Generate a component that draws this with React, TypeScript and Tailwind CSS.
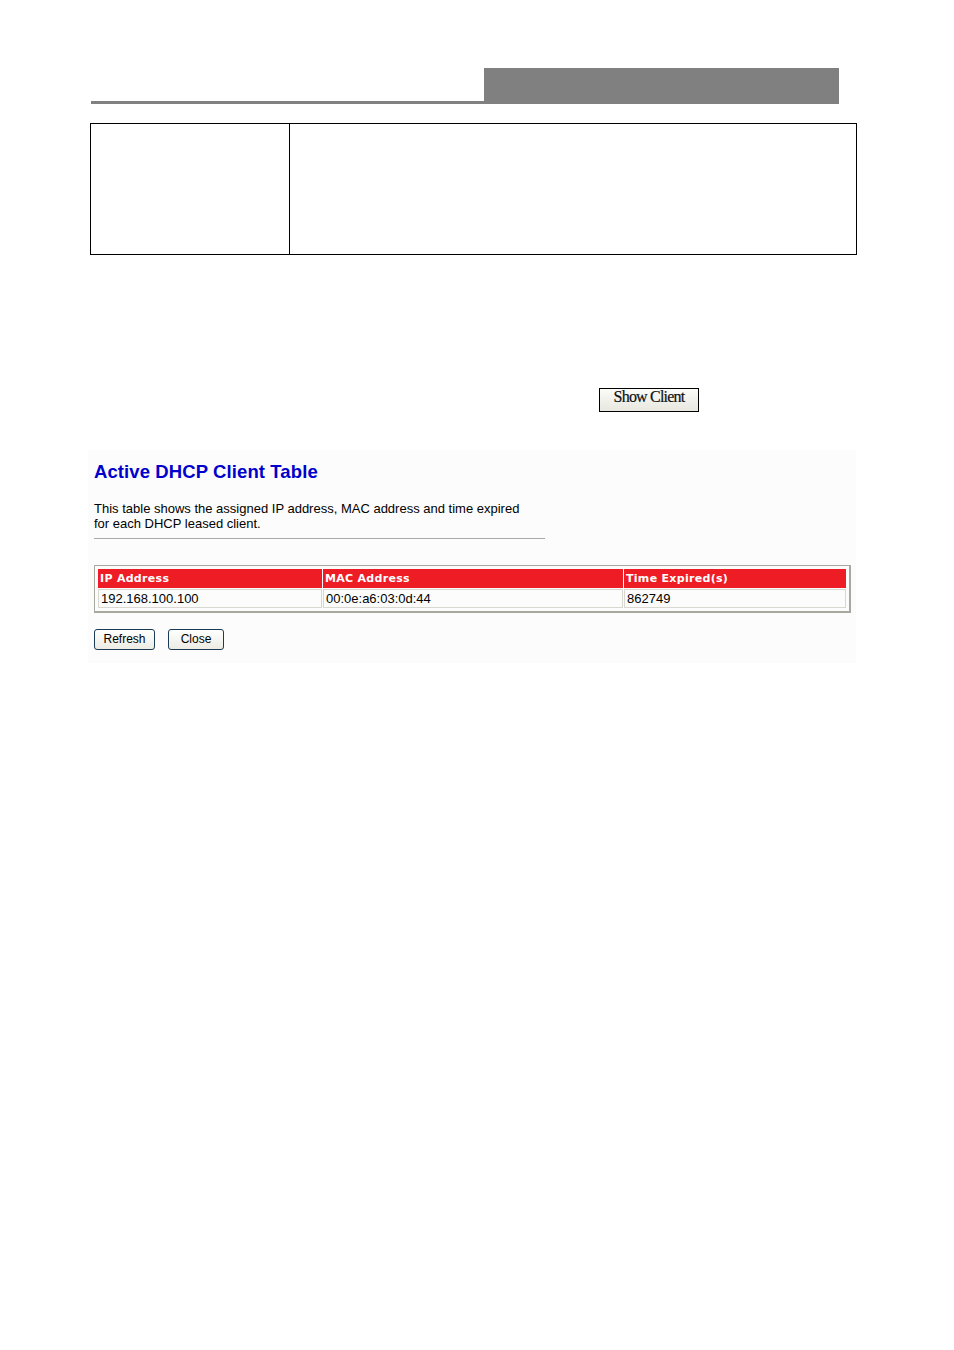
import React from "react";

export default function App() {
  const cell = "border border-[#d8d8d0] px-[2px] h-[19px] leading-[17px] text-[13px] text-black";
  const head = "bg-[#ee1c25] px-[2px] h-[19px] leading-[19px] text-[11px] font-bold text-white tracking-[0.3px]";
  return (
    <div className="w-[954px] h-[1350px] bg-white relative" style={{ fontFamily: '"Liberation Sans", Arial, sans-serif' }}>
      <div className="pt-[68px] pl-[91px] flex items-end">
        <div className="w-[393px] h-[3px] bg-[#808080]" />
        <div className="w-[355px] h-[36px] bg-[#808080]" />
      </div>
      <div className="mt-[19px] ml-[90px] w-[767px] h-[132px] border border-black flex">
        <div className="w-[199px] h-full border-r border-black" />
        <div className="flex-1" />
      </div>
      <div className="mt-[133px] ml-[599px]">
        <button
          className="w-[100px] h-[24px] border border-black bg-gradient-to-b from-[#fbfbf8] to-[#e8e8e0] text-[16px] leading-[16px] pt-[0px] text-[#111] tracking-[-0.8px] flex items-start justify-center [-webkit-text-stroke:0.2px_#111]"
          style={{ fontFamily: '"Liberation Serif", "Times New Roman", serif' }}
        >
          Show Client
        </button>
      </div>
      <div className="mt-[38px] ml-[88px] w-[768px] h-[213px] bg-[#fcfcfc] pl-[6px] pt-[11px]">
        <h1 className="text-[18.5px] leading-[22px] font-bold text-[#0000cc] tracking-[0.1px]">Active DHCP Client Table</h1>
        <p className="mt-[18px] text-[13px] leading-[15px] text-black w-[440px]">
          This table shows the assigned IP address, MAC address and time expired for each DHCP leased client.
        </p>
        <div className="mt-[7px] w-[451px] h-[1px] bg-[#a8a8a8]" />
        <div className="mt-[26px] w-[757px] border border-[#a8a8a0] border-r-[2px] border-b-[2px] p-[2px]">
          <table className="w-full border-separate border-spacing-[1px]" style={{ fontFamily: '"DejaVu Sans", Verdana, sans-serif' }}>
            <tbody>
              <tr>
                <td className={head + " w-[224px]"}>IP Address</td>
                <td className={head + " w-[300px]"}>MAC Address</td>
                <td className={head}>Time Expired(s)</td>
              </tr>
              <tr style={{ fontFamily: '"Liberation Sans", Arial, sans-serif' }}>
                <td className={cell}>192.168.100.100</td>
                <td className={cell}>00:0e:a6:03:0d:44</td>
                <td className={cell}>862749</td>
              </tr>
            </tbody>
          </table>
        </div>
        <div className="mt-[16px] flex gap-[13px]">
          <button className="w-[61px] h-[21px] rounded-[3px] border border-[#1c3b55] bg-gradient-to-b from-white to-[#ecece4] text-[12px] leading-[19px] text-black">Refresh</button>
          <button className="w-[56px] h-[21px] rounded-[3px] border border-[#1c3b55] bg-gradient-to-b from-white to-[#ecece4] text-[12px] leading-[19px] text-black">Close</button>
        </div>
      </div>
    </div>
  );
}
